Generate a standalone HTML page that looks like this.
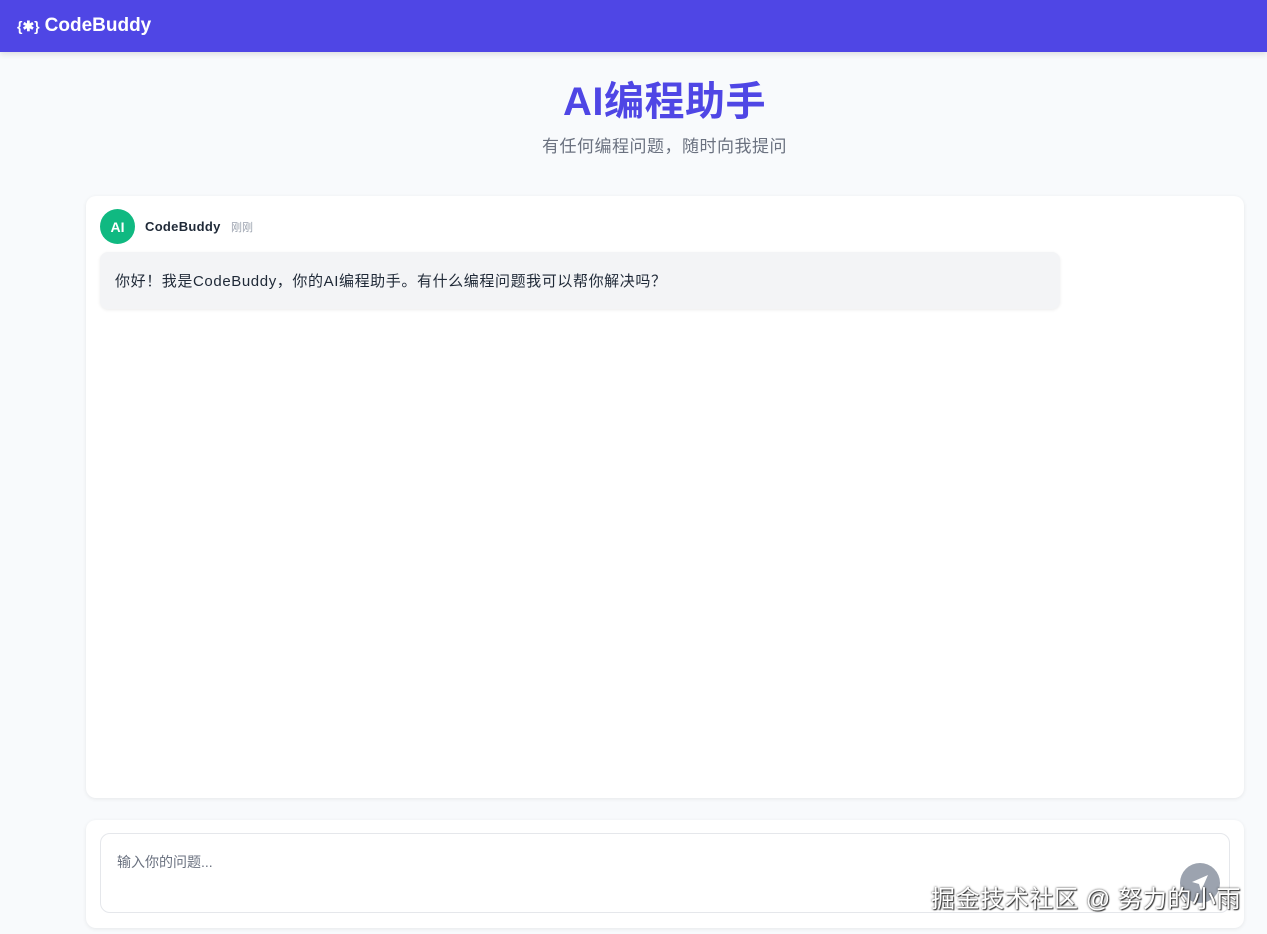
<!DOCTYPE html>
<html><head><meta charset="utf-8"><style>
*{box-sizing:border-box;margin:0;padding:0}
body{width:1267px;height:934px;overflow:hidden;background:#f8fafc;font-family:"Liberation Sans","Noto Sans CJK SC",sans-serif;position:relative}
.top{height:52px;background:#4f46e5;color:#fff;display:flex;align-items:center;padding-left:17px;font-weight:bold;font-size:19px;box-shadow:0 2px 6px rgba(0,0,0,.12)}
.top .ic{font-size:14px;margin-right:5px}
h1{position:absolute;top:69px;width:100%;text-align:center;color:#4f46e5;font-size:40px;font-weight:bold;padding-left:62px;letter-spacing:.5px}
.sub{position:absolute;top:132px;width:100%;text-align:center;color:#6b7280;font-size:17px;padding-left:62px;letter-spacing:.5px}
.chat{position:absolute;left:86px;top:196px;width:1158px;height:602px;background:#fff;border-radius:10px;box-shadow:0 1px 4px rgba(0,0,0,.08)}
.av{position:absolute;left:14px;top:13px;width:35px;height:35px;border-radius:50%;background:#10b981;color:#fff;font-weight:bold;font-size:14px;display:flex;align-items:center;justify-content:center}
.nm{position:absolute;left:59px;top:23px;font-size:13px;font-weight:bold;color:#1f2937;letter-spacing:.3px}
.tm{position:absolute;left:145px;top:23px;font-size:11px;color:#9ca3af}
.bub{position:absolute;left:14px;top:56px;width:960px;height:57px;background:#f3f4f6;border-radius:8px;box-shadow:0 1px 3px rgba(0,0,0,.08);padding:18px 15px;font-size:15px;color:#1f2937;letter-spacing:.6px}
.inp{position:absolute;left:86px;top:820px;width:1158px;height:108px;background:#fff;border-radius:10px;box-shadow:0 1px 4px rgba(0,0,0,.08)}
.box{position:absolute;left:14px;top:13px;width:1130px;height:80px;border:1px solid #e5e7eb;border-radius:10px;padding:18px 16px;font-size:14px;color:#6b7280}
.send{position:absolute;left:1180px;top:863px;width:40px;height:40px;border-radius:50%;background:#9ca3af}
.wm{position:absolute;left:931px;top:879px;font-size:24px;color:#fff;text-shadow:0 0 2px #333,1px 1px 1px #333;letter-spacing:.6px}
</style></head><body>
<div class="top"><span class="ic">{✱}</span>CodeBuddy</div>
<h1>AI编程助手</h1>
<div class="sub">有任何编程问题，随时向我提问</div>
<div class="chat"><div class="av">AI</div><div class="nm">CodeBuddy</div><div class="tm">刚刚</div>
<div class="bub">你好！我是CodeBuddy，你的AI编程助手。有什么编程问题我可以帮你解决吗？</div></div>
<div class="inp"><div class="box">输入你的问题...</div></div>
<div class="send"><svg width="40" height="40" viewBox="0 0 40 40"><path d="M28 12 L12 19 L19 21 L21 28 Z" fill="#fff"/></svg></div>
<div class="wm">掘金技术社区 @ 努力的小雨</div>
</body></html>
